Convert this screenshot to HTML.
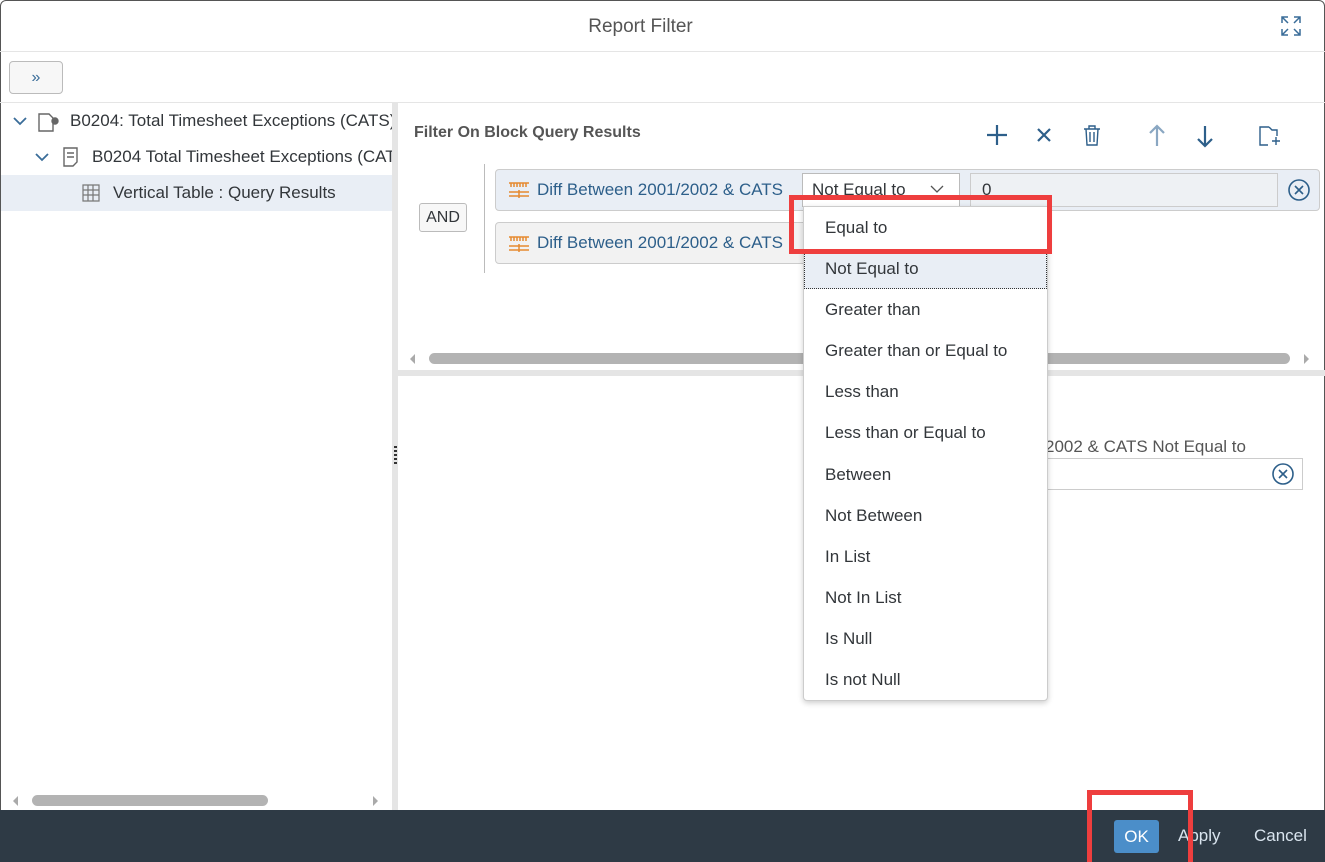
<!DOCTYPE html>
<html><head><style>
*{box-sizing:border-box;margin:0;padding:0}
body{width:1325px;height:862px;position:relative;overflow:hidden;background:#fff;font-family:"Liberation Sans",sans-serif;color:#32363a}
.a{position:absolute}
.t{font-size:17px;white-space:nowrap}
</style></head><body>
<div class="a" style="left:0;top:0;width:1325px;height:862px;border:1px solid #555;border-radius:6px"></div>
<div class="a t" style="left:0;width:1281px;top:16px;text-align:center;font-size:19px;color:#555">Report Filter</div>
<svg class="a" style="left:1280px;top:15px" width="22" height="22" viewBox="0 0 22 22" fill="none" stroke="#3a6d99" stroke-width="1.5"><path d="M2 8V2h6M2 2l6 6M20 8V2h-6M20 2l-6 6M2 14v6h6M2 20l6-6M20 14v6h-6M20 20l-6-6"/></svg>
<div class="a" style="left:0;top:51px;width:1325px;height:1px;background:#e5e5e5"></div>
<div class="a" style="left:9px;top:61px;width:54px;height:33px;border:1px solid #bbb;border-radius:4px;background:#f7f7f7;text-align:center;line-height:31px;color:#3a6d99;font-size:16px">»</div>
<div class="a" style="left:0;top:102px;width:1325px;height:1px;background:#e5e5e5"></div>
<!-- left tree -->
<svg class="a" style="left:13px;top:116px" width="14" height="10"><path d="M1 2l6 6 6-6" stroke="#3a6d99" stroke-width="1.8" fill="none"/></svg>
<svg class="a" style="left:37px;top:110px" width="24" height="22" fill="none" stroke="#666" stroke-width="1.4"><path d="M2 4h10l4 4v13H2z"/><circle cx="18" cy="11" r="3" fill="#666"/></svg>
<div class="a t" style="left:70px;top:111px;width:322px;overflow:hidden;color:#32363a">B0204: Total Timesheet Exceptions (CATS)</div>
<svg class="a" style="left:35px;top:152px" width="14" height="10"><path d="M1 2l6 6 6-6" stroke="#3a6d99" stroke-width="1.8" fill="none"/></svg>
<svg class="a" style="left:62px;top:146px" width="18" height="22" fill="none" stroke="#666" stroke-width="1.4"><path d="M2 2h13v14l-4 4H2z M5 7h7M5 11h7"/></svg>
<div class="a t" style="left:92px;top:147px;width:300px;overflow:hidden">B0204 Total Timesheet Exceptions (CATS)</div>
<div class="a" style="left:1px;top:175px;width:392px;height:36px;background:#e9eef5"></div>
<svg class="a" style="left:82px;top:184px" width="18" height="18" fill="none" stroke="#777" stroke-width="1.2"><path d="M1 1h16v16H1zM1 6h16M1 11h16M6 1v16M11 1v16"/></svg>
<div class="a t" style="left:113px;top:183px">Vertical Table : Query Results</div>
<div class="a" style="left:32px;top:795px;width:236px;height:11px;background:#b3b3b3;border-radius:6px"></div>
<div class="a" style="left:13px;top:796px;width:0;height:0;border:5px solid transparent;border-right-color:#aaa;border-left:0"></div>
<div class="a" style="left:373px;top:796px;width:0;height:0;border:5px solid transparent;border-left-color:#aaa;border-right:0"></div>
<!-- splitter -->
<div class="a" style="left:392px;top:103px;width:6px;height:707px;background:#e5e5e5"></div>
<div class="a" style="left:394px;top:446px;width:3px;height:20px;background:repeating-linear-gradient(#333 0 2px,transparent 2px 4px)"></div>
<!-- right top -->
<div class="a t" style="left:414px;top:124px;font-weight:bold;color:#555;font-size:16px">Filter On Block Query Results</div>
<svg class="a" style="left:985px;top:122px" width="300" height="26" fill="none" stroke-width="2.2">
<path d="M12 3v20M2 13h20" stroke="#2d5f8a"/>
<path d="M53 7l12 12M65 7L53 19" stroke="#2d5f8a"/>
<path d="M99 7h16M104 7V4h6v3M101 7l1 16h10l1-16M105 10v10M109 10v10" stroke="#2d5f8a" stroke-width="1.4"/>
<path d="M172 4v20M165 11l7-7 7 7" stroke="#8aa7c2"/>
<path d="M220 4v20M213 17l7 7 7-7" stroke="#2d5f8a"/>
<path d="M284 5h-9v18h8M284 5l3 3h5v6M287 19h8M291 15v8" stroke="#2d5f8a" stroke-width="1.4"/>
</svg>
<div class="a" style="left:419px;top:203px;width:48px;height:29px;border:1px solid #bbb;border-radius:3px;background:#f7f7f7;text-align:center;line-height:27px;font-size:16px">AND</div>
<div class="a" style="left:484px;top:164px;width:1px;height:109px;background:#bbb"></div>
<div class="a" style="left:495px;top:169px;width:825px;height:42px;border:1px solid #ccc;border-radius:4px;background:#e9eef5"></div>
<div class="a" style="left:495px;top:222px;width:330px;height:42px;border:1px solid #ccc;border-radius:4px;background:#f2f2f2"></div>
<svg class="a" style="left:508px;top:181px" width="22" height="18" stroke="#e6892f" stroke-width="1.5" fill="none"><path d="M1 2h20M3 2v4M6 2v4M9 2v4M12 2v4M15 2v4M18 2v4M1 11h20M1 15h20M11 9v8"/></svg>
<svg class="a" style="left:508px;top:235px" width="22" height="18" stroke="#e6892f" stroke-width="1.5" fill="none"><path d="M1 2h20M3 2v4M6 2v4M9 2v4M12 2v4M15 2v4M18 2v4M1 11h20M1 15h20M11 9v8"/></svg>
<div class="a t" style="left:537px;top:180px;color:#2d5f8a">Diff Between 2001/2002 &amp; CATS</div>
<div class="a t" style="left:537px;top:233px;color:#2d5f8a;width:255px;overflow:hidden">Diff Between 2001/2002 &amp; CATS</div>
<div class="a" style="left:802px;top:173px;width:158px;height:34px;border:1px solid #bbb;background:#fff"></div>
<div class="a t" style="left:812px;top:180px">Not Equal to</div>
<svg class="a" style="left:930px;top:184px" width="14" height="10"><path d="M1 2l6 6 6-6" stroke="#555" stroke-width="1.3" fill="none"/></svg>
<div class="a" style="left:970px;top:173px;width:308px;height:34px;border:1px solid #ccc;background:#eef1f4"></div>
<div class="a t" style="left:982px;top:180px">0</div>
<svg class="a" style="left:1287px;top:178px" width="24" height="24" fill="none" stroke="#2d5f8a" stroke-width="1.6"><circle cx="12" cy="12" r="10"/><path d="M8 8l8 8M16 8l-8 8"/></svg>
<div class="a" style="left:429px;top:353px;width:861px;height:11px;background:#b3b3b3;border-radius:6px"></div>
<div class="a" style="left:410px;top:354px;width:0;height:0;border:5px solid transparent;border-right-color:#aaa;border-left:0"></div>
<div class="a" style="left:1304px;top:354px;width:0;height:0;border:5px solid transparent;border-left-color:#aaa;border-right:0"></div>
<div class="a" style="left:398px;top:370px;width:927px;height:6px;background:#e5e5e5"></div>
<!-- lower -->
<div class="a t" style="left:1045px;top:437px;color:#555">2002 &amp; CATS Not Equal to</div>
<div class="a" style="left:1040px;top:458px;width:263px;height:32px;border:1px solid #ccc"></div>
<svg class="a" style="left:1271px;top:462px" width="24" height="24" fill="none" stroke="#2d5f8a" stroke-width="1.6"><circle cx="12" cy="12" r="10"/><path d="M8 8l8 8M16 8l-8 8"/></svg>
<!-- dropdown -->
<div class="a" style="left:803px;top:206px;width:245px;height:495px;background:#fff;border:1px solid #ccc;border-radius:0 0 4px 4px;box-shadow:0 2px 6px rgba(0,0,0,.2)"></div>
<div class="a" style="left:804px;top:249px;width:243px;height:40px;background:#e9eef5;border:1px dotted #333"></div>
<div class="a t" style="left:825px;top:218px">Equal to</div>
<div class="a t" style="left:825px;top:259px">Not Equal to</div>
<div class="a t" style="left:825px;top:300px">Greater than</div>
<div class="a t" style="left:825px;top:341px">Greater than or Equal to</div>
<div class="a t" style="left:825px;top:382px">Less than</div>
<div class="a t" style="left:825px;top:423px">Less than or Equal to</div>
<div class="a t" style="left:825px;top:465px">Between</div>
<div class="a t" style="left:825px;top:506px">Not Between</div>
<div class="a t" style="left:825px;top:547px">In List</div>
<div class="a t" style="left:825px;top:588px">Not In List</div>
<div class="a t" style="left:825px;top:629px">Is Null</div>
<div class="a t" style="left:825px;top:670px">Is not Null</div>
<div class="a" style="left:789px;top:195px;width:263px;height:59px;border:5px solid #ee3e3e"></div>
<!-- footer -->
<div class="a" style="left:0;top:810px;width:1325px;height:52px;background:#2e3a45"></div>
<div class="a" style="left:1114px;top:820px;width:45px;height:33px;background:#4b8ec9;border-radius:3px;color:#fff;text-align:center;line-height:33px;font-size:17px">OK</div>
<div class="a t" style="left:1178px;top:826px;color:#d9e4ee">Apply</div>
<div class="a t" style="left:1254px;top:826px;color:#d9e4ee">Cancel</div>
<div class="a" style="left:1087px;top:790px;width:106px;height:72px;border:5px solid #ee3e3e;border-bottom:none"></div>
</body></html>
